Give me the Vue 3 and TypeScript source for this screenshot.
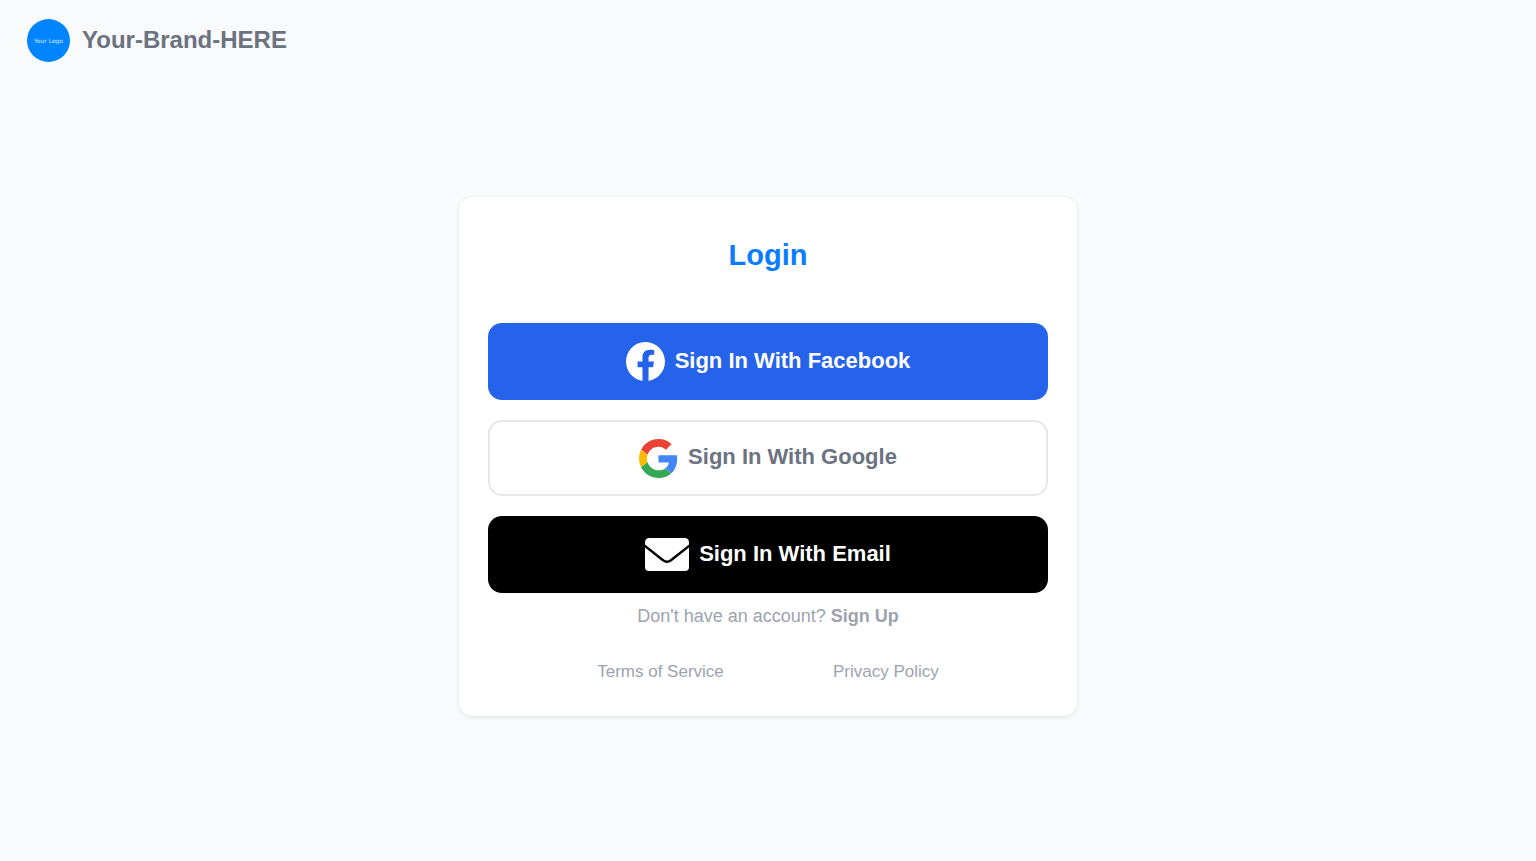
<script setup lang="ts">
const brand: string = 'Your-Brand-HERE'
</script>

<template>
  <div class="page">
    <header class="header">
      <span class="logo">Your Logo</span>
      <span class="brand">{{ brand }}</span>
    </header>
    <main class="main">
      <section class="card">
        <h1 class="title">Login</h1>
        <div class="actions">
          <button type="button" class="action facebook">
            <svg class="icon" viewBox="0 0 16 16" fill="#fff" aria-hidden="true">
              <path d="M16 8.049c0-4.446-3.582-8.05-8-8.05C3.58 0-.002 3.603-.002 8.05c0 4.017 2.926 7.347 6.75 7.951v-5.625h-2.03V8.05H6.75V6.275c0-2.017 1.195-3.131 3.022-3.131.876 0 1.791.157 1.791.157v1.98h-1.009c-.993 0-1.303.621-1.303 1.258v1.51h2.218l-.354 2.326H9.25V16c3.824-.604 6.75-3.934 6.75-7.951" />
            </svg>
            <span class="label">Sign In With Facebook</span>
          </button>
          <button type="button" class="action google">
            <svg class="icon" viewBox="0 0 48 48" aria-hidden="true">
              <path fill="#EA4335" d="M24 9.5c3.54 0 6.71 1.22 9.21 3.6l6.85-6.85C35.9 2.38 30.47 0 24 0 14.62 0 6.51 5.38 2.56 13.22l7.98 6.19C12.43 13.72 17.74 9.5 24 9.5z" />
              <path fill="#4285F4" d="M46.98 24.55c0-1.57-.15-3.09-.38-4.55H24v9.02h12.94c-.58 2.96-2.26 5.48-4.78 7.18l7.73 6c4.51-4.18 7.09-10.36 7.09-17.65z" />
              <path fill="#FBBC05" d="M10.53 28.59c-.48-1.45-.76-2.99-.76-4.59s.27-3.14.76-4.59l-7.98-6.19C.92 16.46 0 20.12 0 24c0 3.88.92 7.54 2.56 10.78l7.97-6.19z" />
              <path fill="#34A853" d="M24 48c6.48 0 11.93-2.13 15.89-5.81l-7.73-6c-2.15 1.45-4.92 2.3-8.16 2.3-6.26 0-11.57-4.22-13.47-9.91l-7.98 6.19C6.51 42.62 14.62 48 24 48z" />
            </svg>
            <span class="label">Sign In With Google</span>
          </button>
          <button type="button" class="action email">
            <svg class="envelope" viewBox="0 0 44 33" fill="#fff" aria-hidden="true">
              <path d="M4.500 0H39.500Q44 0 44 4.500V6.500L25.200 21.200Q22 23.600 18.800 21.200L0 6.500V4.500Q0 0 4.500 0Z" />
              <path d="M0 9.500L17.300 23.200Q22 26.700 26.700 23.200L44 9.500V29Q44 33 40 33H4Q0 33 0 29Z" />
            </svg>
            <span class="label">Sign In With Email</span>
          </button>
        </div>
        <p class="signup">Don't have an account? <a href="#signup">Sign Up</a></p>
        <nav class="legal">
          <a href="#terms">Terms of Service</a>
          <a href="#privacy">Privacy Policy</a>
        </nav>
      </section>
    </main>
  </div>
</template>

<style>
body {
  margin: 0;
  background: #f9fafc;
}
</style>

<style scoped>
.page {
  display: flex;
  flex-direction: column;
  box-sizing: border-box;
  min-height: 100vh;
  background: #f9fafc;
  font-family: "Liberation Sans", Arial, sans-serif;
}
.header {
  display: flex;
  align-items: center;
  gap: 12px;
  padding: 19px 27px;
}
.logo {
  display: flex;
  align-items: center;
  justify-content: center;
  width: 43px;
  height: 43px;
  border-radius: 50%;
  background: #0084ff;
  color: #d9edff;
  font: 6px "DejaVu Sans", sans-serif;
  white-space: nowrap;
}
.brand {
  padding-bottom: 2px;
  color: #6b7280;
  font-size: 24px;
  font-weight: 700;
}
.main {
  display: flex;
  flex: 1;
  align-items: center;
  justify-content: center;
  padding: 0 16px 29px;
}
.card {
  box-sizing: border-box;
  width: 100%;
  max-width: 618px;
  padding: 40px 29px 32px;
  border-radius: 14px;
  background: #fff;
  box-shadow: 0 1px 4px rgba(0, 0, 0, 0.1);
  text-align: center;
}
.title {
  margin: 0 0 50px;
  color: #0a7cff;
  font-size: 29px;
  line-height: 36px;
}
.actions {
  display: flex;
  flex-direction: column;
  gap: 20px;
}
.action {
  display: flex;
  align-items: center;
  justify-content: center;
  gap: 10px;
  box-sizing: border-box;
  height: 77px;
  border: 0;
  border-radius: 14px;
  color: #fff;
  font: 700 22px "Liberation Sans", Arial, sans-serif;
  cursor: pointer;
}
.label {
  padding-bottom: 2px;
}
.facebook {
  background: #2563eb;
}
.google {
  height: 76px;
  border: 2px solid #e5e7eb;
  background: #fff;
  color: #6b7280;
}
.email {
  background: #000;
}
.icon {
  width: 39px;
  height: 39px;
}
.envelope {
  width: 44px;
  height: 33px;
}
.signup {
  margin: 11px 0 32px;
  color: #9ca3af;
  font-size: 18px;
  line-height: 24px;
}
.signup a {
  color: inherit;
  font-weight: 700;
  text-decoration: none;
}
.legal {
  display: flex;
  justify-content: space-evenly;
  font-size: 17px;
  line-height: 24px;
}
.legal a {
  color: #9ca3af;
  text-decoration: none;
}
</style>
